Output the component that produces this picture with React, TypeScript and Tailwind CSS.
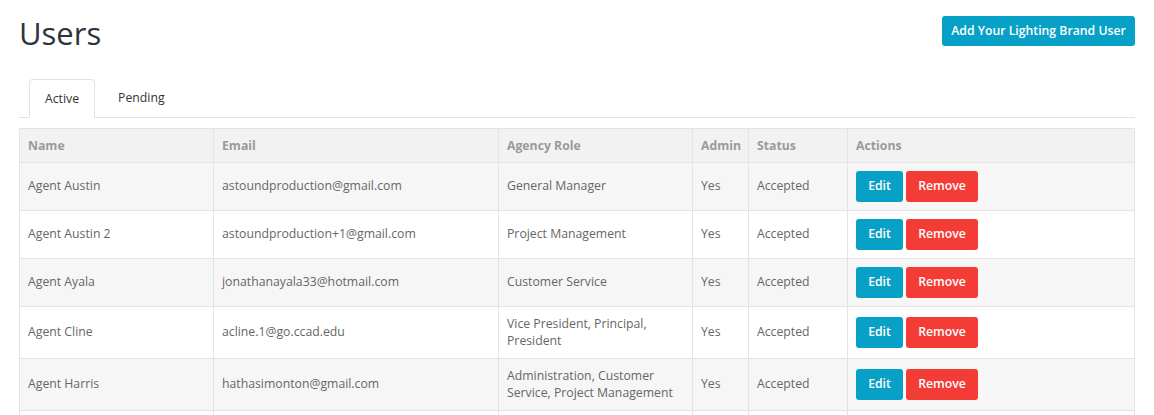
import React from "react";

type User = {
  name: string;
  email: string;
  role: string;
  admin: string;
  status: string;
};

const users: User[] = [
  { name: "Agent Austin", email: "astoundproduction@gmail.com", role: "General Manager", admin: "Yes", status: "Accepted" },
  { name: "Agent Austin 2", email: "astoundproduction+1@gmail.com", role: "Project Management", admin: "Yes", status: "Accepted" },
  { name: "Agent Ayala", email: "jonathanayala33@hotmail.com", role: "Customer Service", admin: "Yes", status: "Accepted" },
  { name: "Agent Cline", email: "acline.1@go.ccad.edu", role: "Vice President, Principal, President", admin: "Yes", status: "Accepted" },
  { name: "Agent Harris", email: "hathasimonton@gmail.com", role: "Administration, Customer Service, Project Management", admin: "Yes", status: "Accepted" },
];

const th = "px-2 py-[7.5px] text-left font-bold text-[#9a9a9a] border border-[#e4e4e4]";
const td = "px-2 py-2 align-middle border border-[#e4e4e4]";

const App = () => {
  return (
    <div
      className="w-[1154px] h-[415px] overflow-hidden bg-white text-[12.25px] leading-[17.5px]"
      style={{ fontFamily: '"Open Sans", "Liberation Sans", sans-serif' }}
    >
      <div className="px-[19px]">
        <div className="flex items-start justify-between pt-[13px]">
          <h1 className="text-[31px] leading-[40px] font-normal text-[#2c3440]">Users</h1>
          <button className="mt-[3px] h-[30px] w-[193px] rounded-[3px] bg-[#07a0c6] text-[12.25px] font-semibold text-white">
            Add Your Lighting Brand User
          </button>
        </div>

        <div className="mt-[26px] flex border-b border-[#e3e3e3] pl-[10px]">
          <div className="-mb-px h-[39px] rounded-t-[4px] border border-b-white border-[#e3e3e3] bg-white px-[15px] pt-[10px] text-[#333]">
            Active
          </div>
          <div className="ml-[7px] h-[38px] px-4 pt-[10px] text-[#333]">Pending</div>
        </div>

        <table className="mt-[10px] w-full table-fixed border-collapse">
          <colgroup>
            <col className="w-[194px]" />
            <col className="w-[285px]" />
            <col className="w-[194px]" />
            <col className="w-[56px]" />
            <col className="w-[99px]" />
            <col />
          </colgroup>
          <thead>
            <tr className="bg-[#f2f2f3]">
              <th className={th}>Name</th>
              <th className={th}>Email</th>
              <th className={th}>Agency Role</th>
              <th className={th}>Admin</th>
              <th className={th}>Status</th>
              <th className={th}>Actions</th>
            </tr>
          </thead>
          <tbody className="text-[#666]">
            {users.map((u, i) => (
              <tr key={u.name} className={i % 2 === 0 ? "bg-[#f6f6f6]" : "bg-white"}>
                <td className={td}>{u.name}</td>
                <td className={td}>{u.email}</td>
                <td className={td}>{u.role}</td>
                <td className={td}>{u.admin}</td>
                <td className={td}>{u.status}</td>
                <td className={td}>
                  <div className="flex gap-[3px]">
                    <button className="h-[31px] w-[47px] rounded-[3px] bg-[#07a0c6] font-semibold text-white">
                      Edit
                    </button>
                    <button className="h-[31px] w-[72px] rounded-[3px] bg-[#f23c35] font-semibold text-white">
                      Remove
                    </button>
                  </div>
                </td>
              </tr>
            ))}
            {/* next row continues below the fold */}
            <tr className="h-[48px] bg-white">
              <td className={td} />
              <td className={td} />
              <td className={td} />
              <td className={td} />
              <td className={td} />
              <td className={td} />
            </tr>
          </tbody>
        </table>
      </div>
    </div>
  );
};

export default App;
